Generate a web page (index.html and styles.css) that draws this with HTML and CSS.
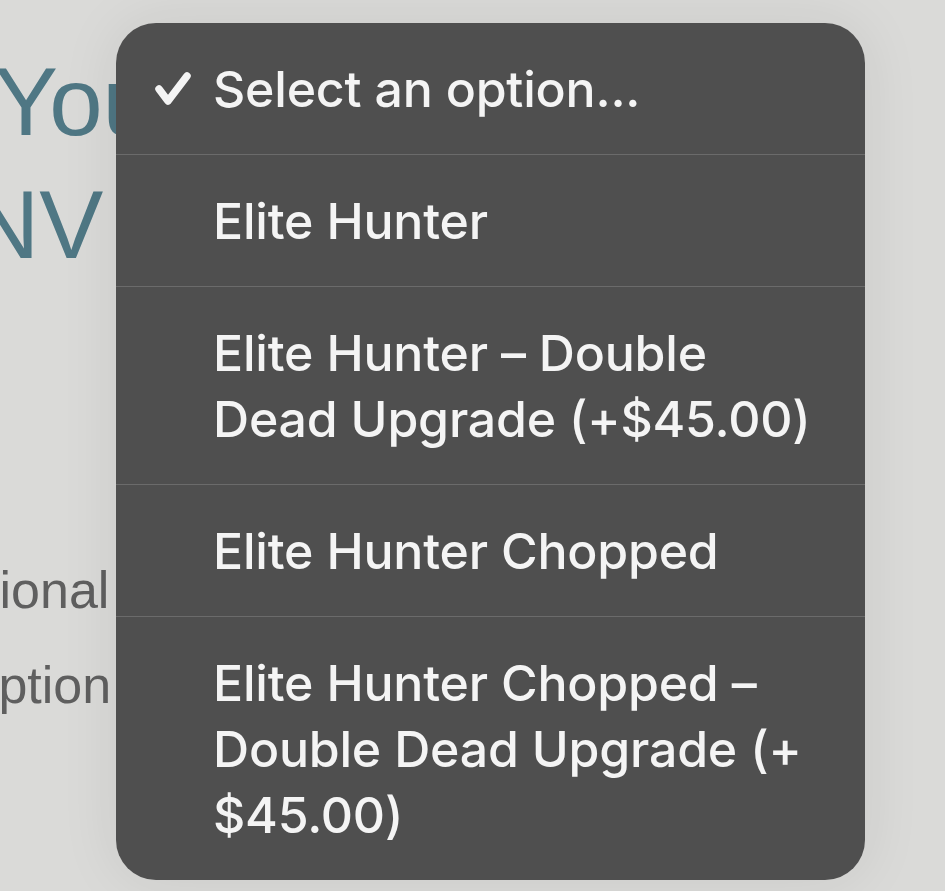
FILE: index.html
```html
<!DOCTYPE html>
<html lang="en">
<head>
    <meta charset="UTF-8">
    <meta name="viewport" content="width=device-width, initial-scale=1.0">
    <title>Choose Model</title>
    <link rel="stylesheet" href="styles.css">
</head>
<body>
    <!-- page behind the open select -->
    <div class="page">
        <h1 class="title">
            <span class="title-line first">Your Order</span>
            <span class="title-line second">NV</span>
        </h1>
        <p class="field-label additional">Additional</p>
        <p class="field-label option">Option</p>
    </div>

    <!-- native select picker, opened -->
    <div class="picker">
        <div class="picker-row selected">
            <span class="check">
                <svg width="42" height="42" viewBox="0 0 42 42">
                    <polyline points="8,21 17,33 36,8" fill="none" stroke="#f4f4f4" stroke-width="7.5" stroke-linecap="round" stroke-linejoin="round"/>
                </svg>
            </span>
            <span class="picker-text">Select an option...</span>
        </div>
        <div class="picker-row">
            <span class="check"></span>
            <span class="picker-text">Elite Hunter</span>
        </div>
        <div class="picker-row">
            <span class="check"></span>
            <span class="picker-text">Elite Hunter – Double Dead Upgrade (+$45.00)</span>
        </div>
        <div class="picker-row">
            <span class="check"></span>
            <span class="picker-text">Elite Hunter Chopped</span>
        </div>
        <div class="picker-row">
            <span class="check"></span>
            <span class="picker-text">Elite Hunter Chopped – Double Dead Upgrade (+<wbr>$45.00)</span>
        </div>
    </div>
</body>
</html>
```

FILE: styles.css
```css
body {
    margin: 0;
    height: 891px;
    overflow: hidden;
    background-color: #dadad8;
    font-family: "Liberation Sans", Arial, sans-serif;
}
.page {
    padding-top: 40px;
}
.title {
    margin: 0;
    font-weight: normal;
    font-size: 96px;
    line-height: 123px;
    color: #4f7784; /* muted teal */
}
.title-line {
    display: block;
    white-space: nowrap;
}
.title-line.first {
    margin-left: -6px;
}
.title-line.second {
    margin-left: -30px;
}
.field-label {
    margin: 0;
    font-size: 52px;
    line-height: 95px;
    color: #5f5f5f;
    white-space: nowrap;
}
.field-label.additional {
    margin-top: 257px;
    margin-left: -119px;
}
.field-label.option {
    margin-left: -42px;
}
.picker {
    position: absolute;
    top: 23px;
    left: 116px;
    width: 749px;
    background-color: #4f4f4f;
    border-radius: 40px;
    overflow: hidden;
    box-shadow: 0 0 60px rgba(0, 0, 0, 0.08);
    font-family: Inter, "Noto Sans", sans-serif;
    font-weight: 550;
    font-size: 50px;
    letter-spacing: -0.2px;
    color: #f4f4f4;
}
.picker-row {
    display: flex;
    align-items: center;
    padding: 33px 40px 32px 0;
    line-height: 66px;
    border-top: 1px solid #6b6b6b;
}
.picker-row:first-child {
    border-top: none;
}
.check {
    flex: 0 0 97px;
    display: flex;
    justify-content: center;
    align-items: center;
    align-self: flex-start;
    height: 66px;
    padding-left: 14px;
    box-sizing: border-box;
}
.check svg {
    display: block;
}
.picker-text {
    flex: 1;
}
```
